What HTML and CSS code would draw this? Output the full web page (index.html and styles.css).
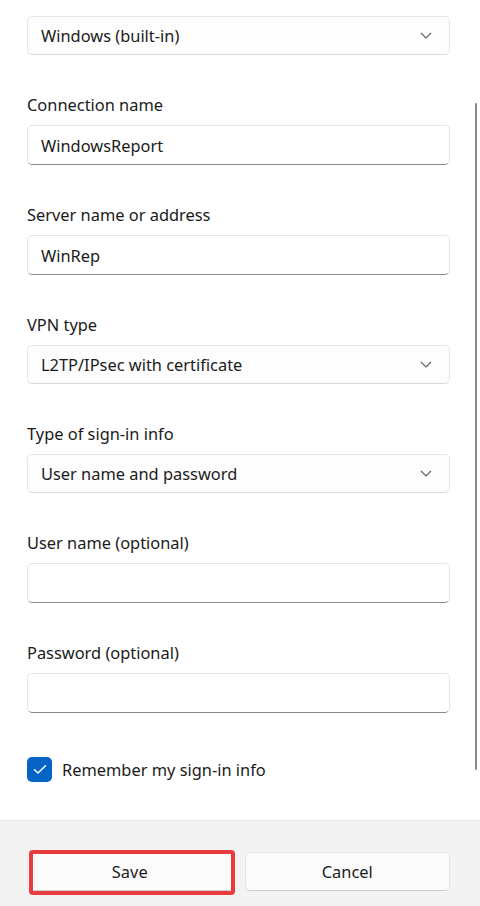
FILE: index.html
```html
<!DOCTYPE html>
<html lang="en">
<head>
<meta charset="utf-8">
<title>Add a VPN connection</title>
<link rel="stylesheet" href="styles.css">
</head>
<body>
<div class="page">
  <main class="form">
    <div class="select first">
      <span>Windows (built-in)</span>
      <svg class="chev" width="12" height="7" viewBox="0 0 12 7"><path d="M1 1 L6 6 L11 1" fill="none" stroke="#5f5f5f" stroke-width="1.1"/></svg>
    </div>

    <div class="group">
      <label class="label">Connection name</label>
      <div class="input">WindowsReport</div>
    </div>

    <div class="group">
      <label class="label">Server name or address</label>
      <div class="input">WinRep</div>
    </div>

    <div class="group">
      <label class="label">VPN type</label>
      <div class="select">
        <span>L2TP/IPsec with certificate</span>
        <svg class="chev" width="12" height="7" viewBox="0 0 12 7"><path d="M1 1 L6 6 L11 1" fill="none" stroke="#5f5f5f" stroke-width="1.1"/></svg>
      </div>
    </div>

    <div class="group">
      <label class="label">Type of sign-in info</label>
      <div class="select">
        <span>User name and password</span>
        <svg class="chev" width="12" height="7" viewBox="0 0 12 7"><path d="M1 1 L6 6 L11 1" fill="none" stroke="#5f5f5f" stroke-width="1.1"/></svg>
      </div>
    </div>

    <div class="group">
      <label class="label">User name (optional)</label>
      <div class="input"></div>
    </div>

    <div class="group">
      <label class="label">Password (optional)</label>
      <div class="input"></div>
    </div>

    <div class="check-row">
      <span class="checkbox">
        <svg width="14" height="11" viewBox="0 0 14 11"><path d="M1.5 5.8 L5 9 L12.5 1.8" fill="none" stroke="#fff" stroke-width="1.5" stroke-linecap="round" stroke-linejoin="round"/></svg>
      </span>
      <span class="check-label">Remember my sign-in info</span>
    </div>
  </main>

  <footer class="footer">
    <div class="btn-wrap">
      <button class="btn">Save</button>
      <span class="highlight"></span>
    </div>
    <div class="btn-wrap">
      <button class="btn">Cancel</button>
    </div>
  </footer>

  <div class="scrollbar"></div>
</div>
</body>
</html>
```

FILE: styles.css
```css
* { box-sizing: border-box; }

html, body {
  margin: 0;
  padding: 0;
  background: #ffffff;
}

body {
  font-family: "Noto Sans", "Open Sans", sans-serif;
  font-size: 16.4px;
  color: #1b1b1b;
}

.page {
  position: relative;
  width: 480px;
  height: 906px;
  display: flex;
  flex-direction: column;
  overflow: hidden;
}

.form {
  display: flex;
  flex-direction: column;
  gap: 37px;
  padding: 16px 30px 0 27px;
}

.group {
  display: flex;
  flex-direction: column;
  gap: 9px;
}

.label {
  display: block;
  height: 24px;
  line-height: 26px;
  color: #1a1a1a;
}

.input,
.select {
  display: flex;
  align-items: center;
  width: 423px;
  padding: 0 13px;
  border: 1px solid #e6e6e6;
  border-radius: 5px;
  background: #fdfdfd;
}

.input {
  height: 40px;
  border-bottom: 1px solid #8a8a8a;
  background: #ffffff;
}

.select {
  height: 39px;
  justify-content: space-between;
  border-bottom-color: #d9d9d9;
}

.chev {
  margin-right: 4px;
}

.check-row {
  display: flex;
  align-items: center;
  gap: 10px;
  margin-top: 7px;
  height: 25px;
}

.checkbox {
  width: 25px;
  height: 25px;
  border-radius: 5px;
  background: #0564c6;
  display: flex;
  align-items: center;
  justify-content: center;
}

.check-label {
  color: #1b1b1b;
}

.footer {
  margin-top: auto;
  height: 86px;
  background: #f3f3f3;
  border-top: 1px solid #e5e5e5;
  display: flex;
  gap: 12px;
  padding: 31px 30px 0 27px;
}

.btn-wrap {
  position: relative;
  flex: 1;
}

.btn {
  width: 100%;
  height: 39px;
  font-family: inherit;
  font-size: 16.4px;
  color: #1b1b1b;
  background: #fbfbfb;
  border: 1px solid #e5e5e5;
  border-bottom-color: #cccccc;
  border-radius: 5px;
  padding: 0;
}

.highlight {
  position: absolute;
  left: 2px;
  top: -2px;
  width: 206px;
  height: 45px;
  border: 4px solid #e83b3d;
  border-radius: 4px;
  pointer-events: none;
}

.scrollbar {
  position: absolute;
  left: 475px;
  top: 103px;
  width: 2px;
  height: 667px;
  border-radius: 1px;
  background: #8a8a8a;
}
```
